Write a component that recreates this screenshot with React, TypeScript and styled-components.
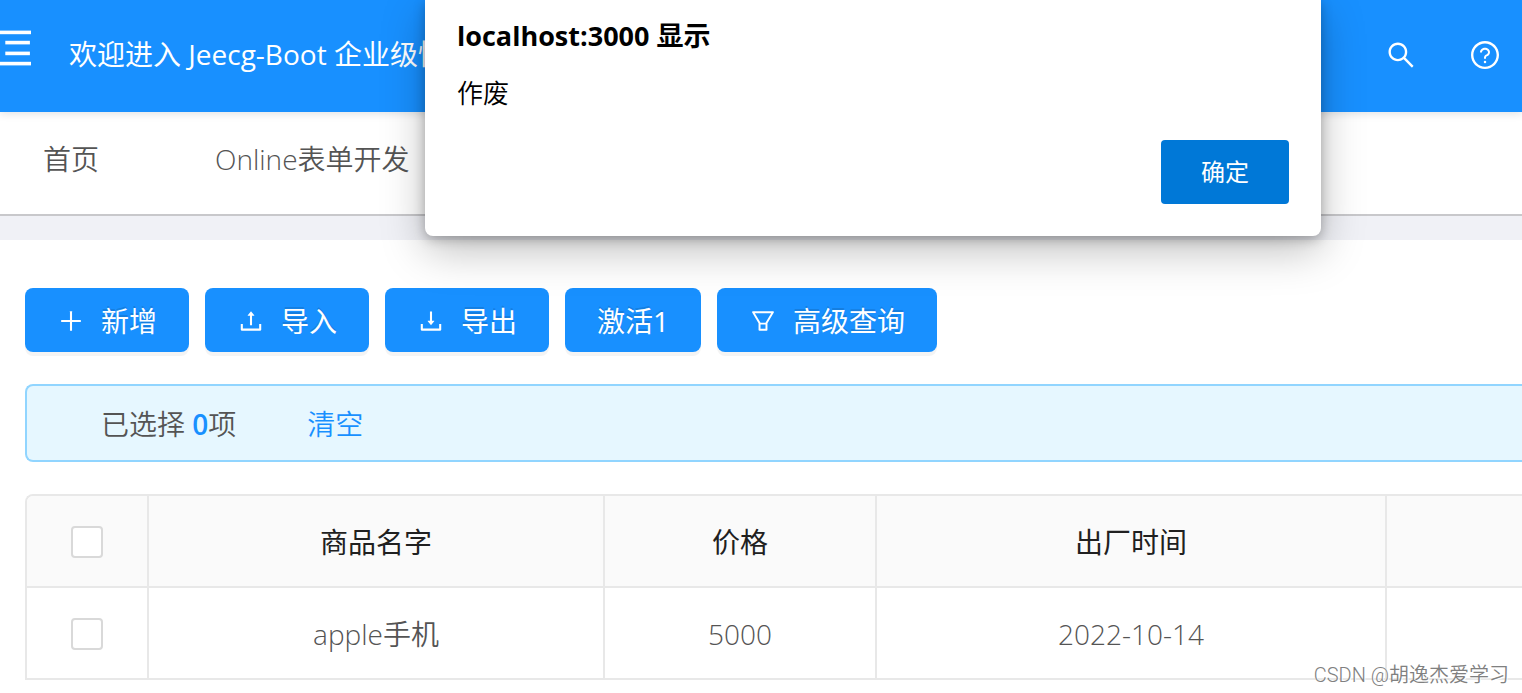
import React from "react";
import styled, { createGlobalStyle } from "styled-components";
import {
  AiOutlineDownload,
  AiOutlineFilter,
  AiOutlinePlus,
  AiOutlineQuestionCircle,
  AiOutlineSearch,
  AiOutlineUpload,
} from "react-icons/ai";

const GlobalStyle = createGlobalStyle`
  *, *::before, *::after { box-sizing: border-box; }
  body {
    margin: 0;
    overflow: hidden;
    background: #fff;
    color: #545454;
    font-family: "Open Sans", "Noto Sans CJK SC", sans-serif;
    font-size: 28px;
    font-weight: 350;
    line-height: 40px;
  }
  button, input { font-family: inherit; margin: 0; }
`;

const Page = styled.div`
  position: relative;
  min-height: 100vh;
  overflow: hidden;
`;

const Header = styled.header`
  position: relative;
  display: flex;
  align-items: center;
  height: 112px;
  padding: 0 21px 2px 0;
  background: #1890ff;
  color: #fff;
  box-shadow: 0 2px 8px rgba(0, 21, 41, 0.12);
`;

const IconButton = styled.button`
  display: flex;
  padding: 0;
  border: 0;
  background: none;
  color: inherit;
  font-size: 32px;
  cursor: pointer;
`;

const MenuButton = styled(IconButton)`
  margin-right: 37px;
  padding-bottom: 12px;
`;

const Welcome = styled.span`
  flex: 1;
  padding-bottom: 2px;
  font-weight: 400;
  white-space: nowrap;
`;

const HeaderActions = styled.div`
  display: flex;
  gap: 52px;
`;

const TabBar = styled.nav`
  display: flex;
  gap: 116px;
  height: 104px;
  padding: 27px 43px;
  border-bottom: 2px solid #c8c8cb;
`;

const TabLink = styled.a`
  color: inherit;
  text-decoration: none;
  white-space: nowrap;
`;

const Content = styled.main`
  padding: 48px 0 0 25px;
  border-top: 24px solid #f0f1f6;
`;

const Toolbar = styled.div`
  display: flex;
  gap: 16px;
  margin-bottom: 32px;
`;

const ToolButton = styled.button`
  display: flex;
  align-items: center;
  gap: 16px;
  height: 64px;
  padding: 2px 32px 0;
  border: 0;
  border-radius: 8px;
  background: #1890ff;
  box-shadow: 0 4px 0 rgba(0, 0, 0, 0.045);
  color: #fff;
  font-size: 28px;
  line-height: 40px;
  text-shadow: 0 -2px 0 rgba(0, 0, 0, 0.12);
  white-space: nowrap;
  cursor: pointer;
`;

const SelectionBar = styled.div`
  display: flex;
  align-items: center;
  gap: 71px;
  height: 78px;
  margin-bottom: 32px;
  padding: 2px 0 0 74px;
  border: 2px solid #91d5ff;
  border-right: 0;
  border-radius: 8px 0 0 8px;
  background: #e6f7ff;
`;

const Count = styled.strong`
  color: #1890ff;
  font-weight: 600;
`;

const ClearLink = styled.a`
  color: #1890ff;
  text-decoration: none;
`;

const Table = styled.table`
  width: 100%;
  table-layout: fixed;
  border-collapse: separate;
  border-spacing: 0;
  border: 2px solid #e8e8e8;
  border-width: 2px 0 0 2px;
  border-radius: 8px 0 0 0;
  text-align: center;
`;

const Col = styled.col<{ $width?: number }>`
  width: ${(p) => (p.$width ? `${p.$width}px` : "auto")};
`;

const Cell = styled.td`
  height: 92px;
  padding: 2px 0 0;
  border: 2px solid #e8e8e8;
  border-width: 0 2px 2px 0;
  vertical-align: middle;

  &:last-child { border-right: 0; }
`;

const HeadCell = styled(Cell)`
  background: #fafafa;
  color: #202020;
  font-weight: 400;

  &:first-child { border-top-left-radius: 6px; }
`;

const Checkbox = styled.input`
  display: block;
  width: 32px;
  height: 32px;
  margin: 0 auto;
  appearance: none;
  border: 2px solid #d9d9d9;
  border-radius: 4px;
  background: #fff;
`;

const Dialog = styled.section`
  position: absolute;
  top: 0;
  right: 201px;
  display: flex;
  flex-direction: column;
  width: 896px;
  height: 236px;
  padding: 16px 32px 32px;
  border-radius: 0 0 8px 8px;
  background: #fff;
  color: #000;
  box-shadow: 0 14px 44px rgba(0, 0, 0, 0.26), 0 3px 12px rgba(0, 0, 0, 0.26);
`;

const DialogTitle = styled.h1`
  margin: 0 0 17px;
  font-size: 27px;
  font-weight: 700;
  line-height: 40px;
`;

const DialogMessage = styled.p`
  margin: 0;
  font-size: 26px;
  line-height: 40px;
`;

const ConfirmButton = styled.button`
  align-self: flex-end;
  width: 128px;
  height: 64px;
  margin-top: auto;
  padding: 0 0 4px;
  border: 0;
  border-radius: 4px;
  background: #0078d7;
  color: #fff;
  font-size: 24px;
  font-weight: 400;
  cursor: pointer;
`;

const Watermark = styled.span`
  position: absolute;
  right: 13px;
  bottom: 4px;
  color: #808080;
  font-family: Roboto, "Noto Sans CJK SC", sans-serif;
  font-size: 20px;
  line-height: 28px;
  text-shadow: 1px 1px 0 #fff;
`;

const MenuIcon = () => (
  <svg width="32" height="38" viewBox="0 0 32 38" fill="currentColor" aria-hidden="true">
    <rect x="0" y="0.6" width="31" height="3.6" />
    <rect x="5.3" y="10.8" width="24.6" height="3.6" />
    <rect x="5.3" y="21.6" width="24.6" height="3.6" />
    <rect x="0" y="31.8" width="31" height="3.6" />
  </svg>
);

const columns = [
  { title: "商品名字", width: 456 },
  { title: "价格", width: 272 },
  { title: "出厂时间", width: 510 },
  { title: "" },
];

const rows = [["apple手机", "5000", "2022-10-14", ""]];

export default function App() {
  return (
    <Page>
      <GlobalStyle />
      <Header>
        <MenuButton aria-label="菜单">
          <MenuIcon />
        </MenuButton>
        <Welcome>欢迎进入 Jeecg-Boot 企业级快</Welcome>
        <HeaderActions>
          <IconButton aria-label="搜索">
            <AiOutlineSearch />
          </IconButton>
          <IconButton aria-label="帮助">
            <AiOutlineQuestionCircle />
          </IconButton>
        </HeaderActions>
      </Header>

      <TabBar>
        <TabLink href="#home">首页</TabLink>
        <TabLink href="#online">Online表单开发</TabLink>
      </TabBar>

      <Content>
        <Toolbar>
          <ToolButton><AiOutlinePlus />新增</ToolButton>
          <ToolButton><AiOutlineUpload />导入</ToolButton>
          <ToolButton><AiOutlineDownload />导出</ToolButton>
          <ToolButton>激活1</ToolButton>
          <ToolButton><AiOutlineFilter />高级查询</ToolButton>
        </Toolbar>

        <SelectionBar>
          <span>已选择 <Count>0</Count>项</span>
          <ClearLink href="#clear">清空</ClearLink>
        </SelectionBar>

        <Table>
          <colgroup>
            <Col $width={122} />
            {columns.map((c, i) => <Col key={i} $width={c.width} />)}
          </colgroup>
          <thead>
            <tr>
              <HeadCell as="th">
                <Checkbox type="checkbox" aria-label="全选" />
              </HeadCell>
              {columns.map((c, i) => <HeadCell as="th" key={i}>{c.title}</HeadCell>)}
            </tr>
          </thead>
          <tbody>
            {rows.map((row) => (
              <tr key={row[0]}>
                <Cell>
                  <Checkbox type="checkbox" aria-label={row[0]} />
                </Cell>
                {row.map((value, i) => <Cell key={i}>{value}</Cell>)}
              </tr>
            ))}
          </tbody>
        </Table>
      </Content>

      <Dialog role="alertdialog" aria-labelledby="dialog-title">
        <DialogTitle id="dialog-title">localhost:3000 显示</DialogTitle>
        <DialogMessage>作废</DialogMessage>
        <ConfirmButton>确定</ConfirmButton>
      </Dialog>

      <Watermark>CSDN @胡逸杰爱学习</Watermark>
    </Page>
  );
}
